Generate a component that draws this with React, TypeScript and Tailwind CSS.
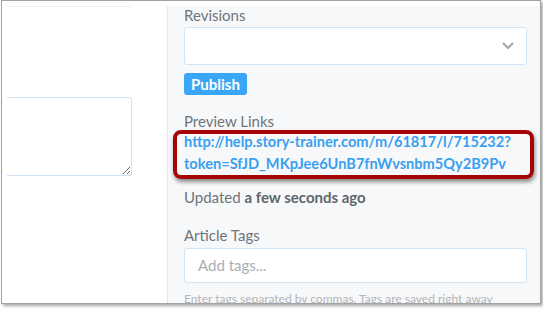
import React from "react";

const font = { fontFamily: "Lato, 'Open Sans', sans-serif" };

function Chevron() {
  return (
    <svg width="12" height="8" viewBox="0 0 12 8" fill="none">
      <path d="M1.5 1.5 L6 6 L10.5 1.5" stroke="#a3a8ad" strokeWidth="2" strokeLinecap="round" strokeLinejoin="round" />
    </svg>
  );
}

export default function App() {
  return (
    <div className="w-[543px] h-[310px] bg-white overflow-hidden" style={font}>
      <div className="ml-[1px] w-[540px] h-[304px] border border-[#a3a3a3] bg-white shadow-[2px_2px_3px_rgba(0,0,0,0.35)] overflow-hidden">
        <div className="flex h-full pt-[5px]">
          {/* editor area */}
          <div className="w-[165px] pl-[5px]">
            <div className="w-[125px] border-t border-[#edf1f4]" />
            <textarea
              readOnly
              className="mt-[90px] block w-[125px] h-[79px] border border-l-0 border-[#cfe4f6] rounded-r-[3px] bg-white outline-none"
            />
          </div>

          {/* sidebar */}
          <div className="flex-1 border-l border-[#e5e8eb] bg-[#f7f8f9] pl-[16px] pr-[13px]">
            <div className="h-[18px] leading-[18px] text-[15px] text-[#6e7479]">Revisions</div>
            <div className="mt-[3px] h-[38px] rounded-[3px] border border-[#d2e5f6] bg-white flex items-center justify-end pr-[12px]">
              <Chevron />
            </div>
            <button className="mt-[8px] block h-[22px] w-[63px] rounded-[3px] bg-[#3aa7f6] text-white text-[15px] font-bold leading-[22px] text-center">
              Publish
            </button>

            <div className="mt-[16px] h-[20px] leading-[20px] text-[15px] text-[#6e7479]">Preview Links</div>
            <div className="relative">
              <a className="block text-[14.6px] font-bold leading-[22px] text-[#3a9ff1] whitespace-nowrap">
                http://help.story-trainer.com/m/61817/l/715232?
                <br />
                token=SfJD_MKpJee6UnB7fnWvsnbm5Qy2B9Pv
              </a>
              <div className="absolute left-[-11px] top-[-1px] w-[361px] h-[49px] rounded-[8px] border-[4px] border-[#a50505] shadow-[1px_3px_4px_rgba(0,0,0,0.45)]" />
            </div>

            <div className="mt-[12px] h-[20px] leading-[20px] text-[15px] text-[#6e7479]">
              Updated <span className="font-bold text-[#5f666b]">a few seconds ago</span>
            </div>

            <div className="mt-[18px] h-[20px] leading-[20px] text-[15px] text-[#6e7479]">Article Tags</div>
            <div className="mt-[3px] h-[35px] rounded-[3px] border border-[#d2e5f6] bg-white flex items-center pl-[13px] text-[15px] text-[#a9aeb2]">
              Add tags...
            </div>
            <div className="mt-[8px] leading-[16px] text-[12px] text-[#b1b6ba] whitespace-nowrap">
              Enter tags separated by commas. Tags are saved right away
            </div>
          </div>
        </div>
      </div>
    </div>
  );
}
